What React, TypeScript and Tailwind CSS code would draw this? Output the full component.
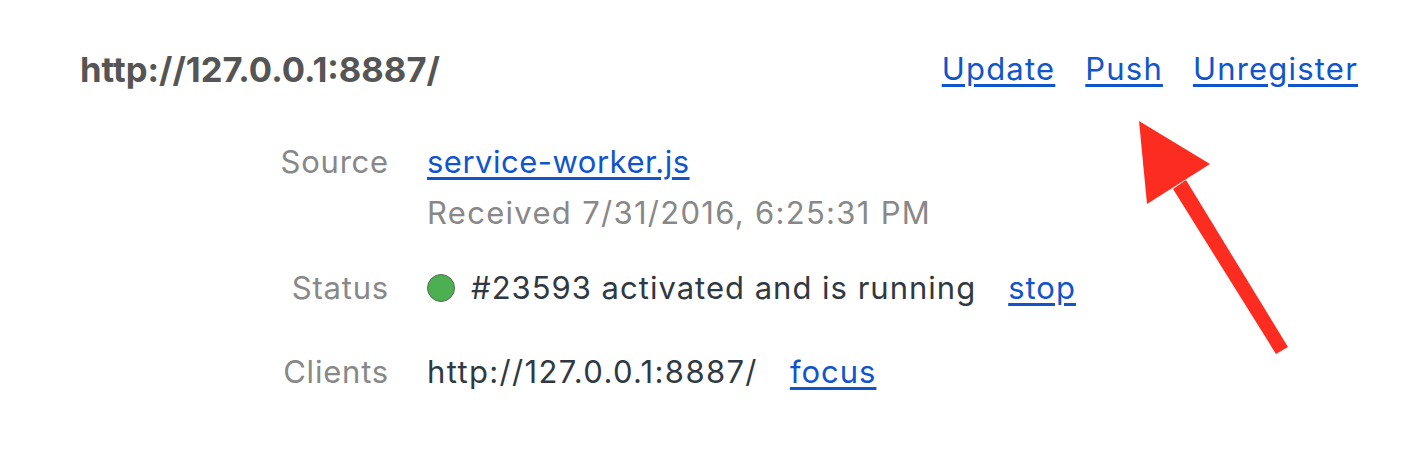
import React from "react";

const font = { fontFamily: "Inter, Roboto, 'Liberation Sans', sans-serif" };

function Arrow() {
  return (
    <svg className="absolute left-0 top-0 pointer-events-none" width="1408" height="468" viewBox="0 0 1408 468">
      <polygon points="1139,121 1210,164 1147,204" fill="#fc2c21" />
      <polygon points="1173,189 1186,180 1288,347 1276,354" fill="#fc2c21" />
    </svg>
  );
}

const link = "text-[#1155cc] underline underline-offset-[4px]";

export default function App() {
  return (
    <div className="relative w-[1408px] h-[468px] bg-white overflow-hidden" style={font}>
      <div className="pl-[80px] pr-[50px] pt-[51px]">
        <div className="flex items-center justify-between h-[36px]">
          <span className="text-[34.6px] leading-[36px] font-bold text-[#555]">http://127.0.0.1:8887/</span>
          <div className="flex items-center gap-[30px] text-[31px] leading-[36px] tracking-[1.2px]">
            <a className={link} href="#">Update</a>
            <a className={link} href="#">Push</a>
            <a className={link} href="#">Unregister</a>
          </div>
        </div>

        <div className="grid grid-cols-[309px_1fr] gap-x-[38px] mt-[57px] text-[31px] leading-[36px]">
          <div className="text-right text-[#888] tracking-[0.8px]">Source</div>
          <div>
            <a className={`${link} tracking-[0.5px]`} href="#">service-worker.js</a>
            <div className="mt-[15px] text-[#888] tracking-[1.3px]">Received 7/31/2016, 6:25:31 PM</div>
          </div>

          <div className="text-right text-[#888] mt-[39px] tracking-[0.8px]">Status</div>
          <div className="mt-[39px] flex items-center text-[#303942]">
            <span className="w-[28px] h-[28px] rounded-full bg-[#4caf50] border border-[#5a6b5a] mr-[16px]" />
            <span className="tracking-[1px]">#23593 activated and is running</span>
            <a className={`${link} ml-[32px] tracking-[1px]`} href="#">stop</a>
          </div>

          <div className="text-right text-[#888] mt-[48px] tracking-[0.8px]">Clients</div>
          <div className="mt-[48px] flex items-center text-[#303942]">
            <span className="tracking-[1.35px]">http://127.0.0.1:8887/</span>
            <a className={`${link} ml-[32px] tracking-[1px]`} href="#">focus</a>
          </div>
        </div>
      </div>
      <Arrow />
    </div>
  );
}
